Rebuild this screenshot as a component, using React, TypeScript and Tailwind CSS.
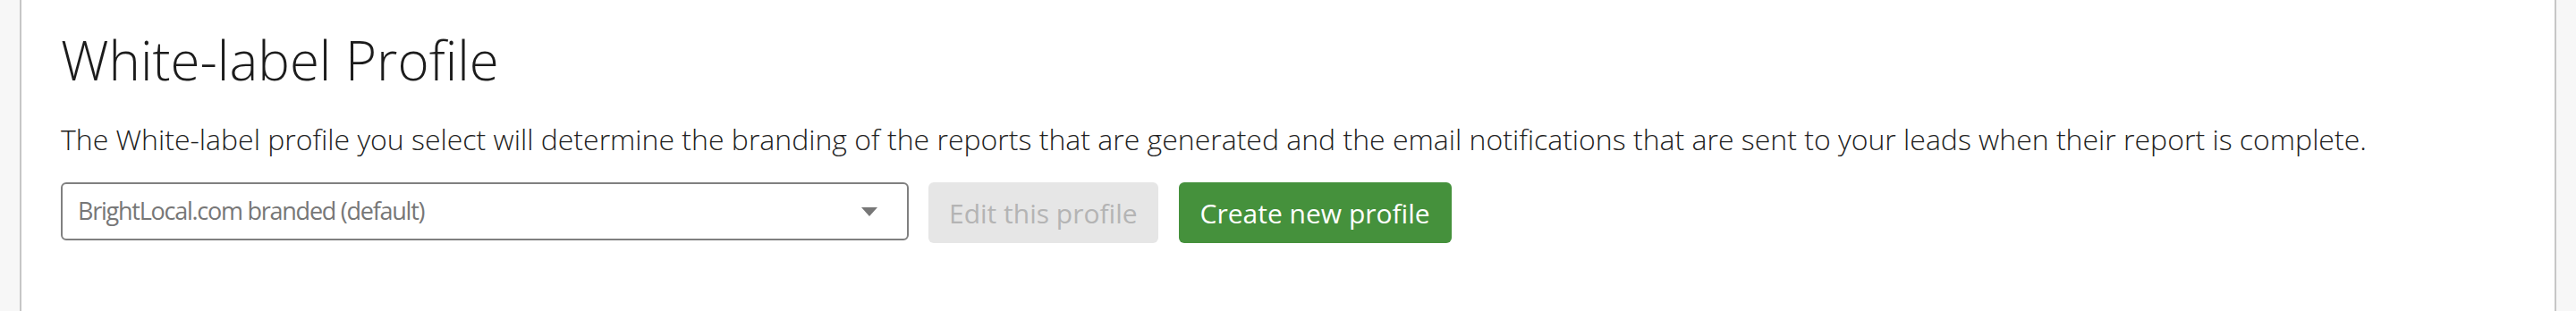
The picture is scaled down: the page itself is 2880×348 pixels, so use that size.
export default function App() {
  return (
    <div className="min-h-[348px] bg-[#f7f7f7] px-[22px] font-['Open_Sans',sans-serif]">
      <div className="min-h-[348px] border-x-2 border-[#c6c6c6] bg-white px-[44px] pt-[34px]">
        <h1 className="text-[60px] leading-[66px] font-light text-[#1c1c1c]">
          White-label Profile
        </h1>
        <p className="mt-[34px] text-[32px] leading-[44px] font-light text-[#222]">
          The White-label profile you select will determine the branding of the
          reports that are generated and the email notifications that are sent
          to your leads when their report is complete.
        </p>
        <div className="mt-[26px] flex items-start gap-[22px]">
          <div className="flex h-[65px] w-[948px] items-center justify-between rounded-[6px] border-2 border-[#808080] pl-[17px] pr-[33px]">
            <span className="text-[27px] tracking-[-1.25px] text-[#777]">
              BrightLocal.com branded (default)
            </span>
            <svg width="18" height="10" viewBox="0 0 18 10">
              <polygon points="0,0 18,0 9,10" fill="#777" />
            </svg>
          </div>
          <button
            disabled
            className="h-[68px] rounded-[6px] bg-[#e6e6e6] px-[23px] text-[30px] text-[#b4b4b4]"
          >
            Edit this profile
          </button>
          <button className="ml-[1px] h-[68px] rounded-[6px] bg-[#45913c] px-[24px] text-[30px] text-white">
            Create new profile
          </button>
        </div>
      </div>
    </div>
  );
}
